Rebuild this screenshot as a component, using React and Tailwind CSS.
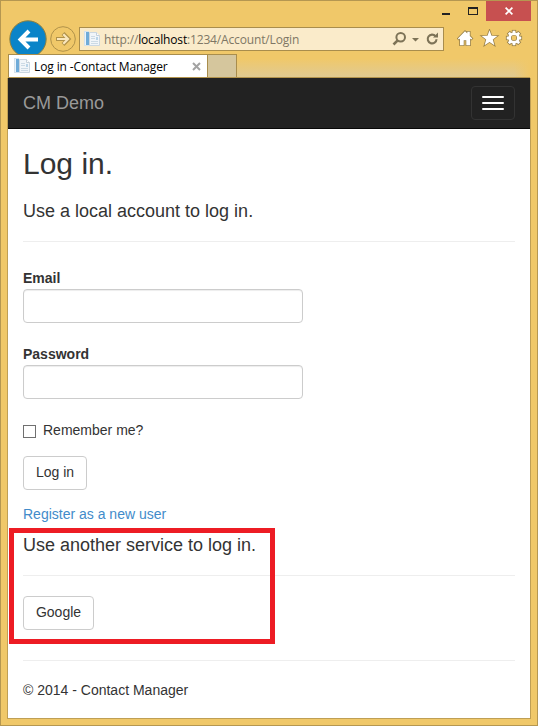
import React from "react";

function PageIcon() {
  return (
    <svg width="16" height="16" viewBox="0 0 16 16" className="block shrink-0">
      <path d="M5.500 1.500h7l3 3v10h-10z" fill="#f1f5f9" stroke="#cbd7e1" />
      <path d="M12.500 1.500v3h3" fill="#fff" stroke="#c5d0da" />
      <path d="M7 5.500h4M7 7.500h4M7 10.500h7M7 12.500h7" stroke="#ccdae5" />
      <rect x="12" y="6" width="2" height="3" fill="#b9d4e8" />
      <rect x="0.500" y="0.500" width="4" height="14" fill="#eaf3fa" stroke="#d5e2ec" />
      <rect x="2" y="1" width="3" height="13" fill="#6fabd8" />
    </svg>
  );
}

function BackButton() {
  return (
    <svg width="38" height="34" viewBox="0 0 38 34" className="block">
      <circle cx="19" cy="19" r="18.200" fill="#0a84c8" stroke="#8f803f" strokeWidth="1" />
      <path d="M29 19.500H11.500M20 11L11.500 19.500l8.500 8.500" fill="none" stroke="#fff" strokeWidth="4" />
    </svg>
  );
}

function ForwardButton() {
  return (
    <svg width="26" height="26" viewBox="0 0 26 26" className="block">
      <circle cx="13" cy="13" r="12.300" fill="none" stroke="#b0924a" />
      <path d="M6 13h12M13 7.500l5.500 5.500l-5.500 5.500" fill="none" stroke="#b0924a" strokeWidth="4" />
      <path d="M7 13h11M13.300 8.200L18 13l-4.700 4.800" fill="none" stroke="#fae7bd" strokeWidth="2.200" />
    </svg>
  );
}

function AddressIcons() {
  return (
    <svg width="50" height="22" viewBox="0 0 50 22" className="block">
      <g fill="none" stroke="#7d7357">
        <circle cx="8.700" cy="9.200" r="4.300" strokeWidth="2" />
        <path d="M5.700 12.300L1.500 16.500" strokeWidth="2.600" />
        <path d="M43.500 8.200a4.400 4.400 0 1 0 1 3" strokeWidth="2.100" />
      </g>
      <path d="M20 10h7l-3.500 3.500zM41 9.500h5v-5z" fill="#7d7357" />
    </svg>
  );
}

const gearTeeth = [0, 45, 90, 135, 180, 225, 270, 315];

function ToolIcons() {
  return (
    <svg width="66" height="18" viewBox="0 0 66 18" className="block">
      <g fill="#fff" stroke="#9a824a" strokeWidth="1.600" paintOrder="stroke">
        <path d="M.9 9.500L8 2.200l2.300 2.200V2.800h2.500v4.100l2.500 2.600-1 1-1.200-1v6.700H9.300v-5H6.700v5H3V9.500l-1.100 1z" />
        <path d="M32.500 1.300l2 5.400 5.800.2-4.500 3.600 1.600 5.700-4.900-3.300-4.900 3.300 1.600-5.700-4.500-3.600 5.800-.2z" />
      </g>
      <g transform="translate(57 9)">
        <g fill="#fff" stroke="#9a824a" strokeWidth="1">
          {gearTeeth.map((a) => (
            <rect key={a} x="-1.700" y="-7.600" width="3.400" height="4" transform={`rotate(${a})`} />
          ))}
        </g>
        <circle r="4.400" fill="none" stroke="#9a824a" strokeWidth="4" />
        <g fill="#fff">
          {gearTeeth.map((a) => (
            <rect key={a} x="-1.300" y="-7.200" width="2.600" height="3" transform={`rotate(${a})`} />
          ))}
        </g>
        <circle r="4.400" fill="none" stroke="#fff" strokeWidth="2.700" />
      </g>
    </svg>
  );
}

function Rule({ className }) {
  return <div className={`h-px bg-[#eeeeee] ${className}`} />;
}

function Field({ label, type, className }) {
  return (
    <label className={`block ${className}`}>
      <span className="block h-[21px] font-bold leading-5">{label}</span>
      <input
        type={type}
        className="block h-[34px] w-[280px] rounded border border-[#cccccc] bg-white px-3 shadow-[inset_0_1px_1px_rgba(0,0,0,0.075)] outline-none"
      />
    </label>
  );
}

function Button({ children, className }) {
  return (
    <button className={`block h-[34px] rounded border border-[#cccccc] bg-white pb-[2px] text-center leading-5 ${className}`}>
      {children}
    </button>
  );
}

function BrowserChrome() {
  return (
    <header className="h-[77px] font-['Open_Sans','Noto_Sans',sans-serif]">
      <div className="-mr-px flex h-[19px] justify-end">
        <div className="order-last flex h-5 w-[45px] shrink-0 items-center justify-center bg-[#c75050]">
          <svg width="8" height="8" viewBox="0 0 8 8">
            <path d="M.6.600l6.800 6.800M7.400.600L.600 7.400" stroke="#fff" strokeWidth="1.700" />
          </svg>
        </div>
        <div className="mr-[18px] mt-3 h-0.5 w-2 bg-[#222]" />
        <div className="mr-2 mt-[6px] h-2 w-[10px] border border-t-2 border-[#222]" />
      </div>
      <div className="flex h-[34px] items-start">
        <div className="ml-[1px] w-[38px]"><BackButton /></div>
        <div className="ml-[3px] mt-[6px] w-[26px]"><ForwardButton /></div>
        <div className="ml-[3px] mt-[7px] flex h-6 w-[365px] items-center border border-[#a98d4c] bg-[#faebca] pl-1">
          <PageIcon />
          <span className="ml-1 w-[200px] whitespace-nowrap pt-[2px] text-[12px] leading-5 tracking-[-0.155px] text-[#7e7765]">
            http://<span className="text-black">localhost</span>:1234/Account/Login
          </span>
          <span className="ml-[88px]"><AddressIcons /></span>
        </div>
        <div className="ml-[13px] mt-[9px]"><ToolIcons /></div>
      </div>
      <div className="flex h-[24px] border-b border-[#b2934c] bg-linear-to-b from-[#f0c869] from-20% to-[#e0ca91]">
        <div className="w-px bg-[#a98d4c]" />
        <div className="flex w-[199px] items-center border-r border-t border-[#a98d4c] bg-white pl-[5px]">
          <PageIcon />
          <span className="ml-1 w-[136px] whitespace-nowrap pt-px text-[12px] leading-5 tracking-[-0.12px] text-black">
            Log in -Contact Manager
          </span>
          <svg width="9" height="9" viewBox="0 0 9 9" className="ml-[22px]">
            <path d="M1 1l7 7M8 1L1 8" stroke="#a3a3a3" strokeWidth="2" />
          </svg>
        </div>
        <div className="w-[29px] border-r border-t border-[#a98d4c] bg-[#d5c69d]" />
        <div className="ml-auto w-4 bg-linear-to-l from-[#f0c869] to-transparent" />
      </div>
    </header>
  );
}

function Navbar() {
  return (
    <nav className="flex h-[51px] items-center justify-between border-b border-[#080808] bg-[#222222] px-[15px]">
      <span className="text-[18px] leading-5 text-[#999999]">CM Demo</span>
      <button className="flex h-[34px] w-11 flex-col items-center justify-center gap-1 rounded border border-[#333333]">
        <span className="h-0.5 w-[22px] rounded-[1px] bg-white" />
        <span className="h-0.5 w-[22px] rounded-[1px] bg-white" />
        <span className="h-0.5 w-[22px] rounded-[1px] bg-white" />
      </button>
    </nav>
  );
}

export default function App() {
  return (
    <div className="relative h-[726px] w-[538px] overflow-hidden border border-[#b59751] bg-[#f0c869] px-[7px] font-['Liberation_Sans',Arial,sans-serif] text-[14px] leading-5 text-[#333333]">
      <BrowserChrome />
      <div className="-ml-px h-[641px] w-[524px] border border-t-0 border-[#bf9f55] bg-white">
        <Navbar />
        <main className="px-[15px] pt-[18px]">
          <h2 className="h-[54px] text-[30px] leading-[33px]">Log in.</h2>
          <h4 className="h-10 text-[18px] leading-5">Use a local account to log in.</h4>
          <Rule className="" />
          <Field label="Email" type="text" className="mt-[26px]" />
          <Field label="Password" type="password" className="mt-[21px]" />
          <label className="mt-[21px] flex h-5">
            <input type="checkbox" className="mt-[5px] h-[13px] w-[13px] appearance-none border border-[#707070] bg-white" />
            <span className="ml-[7px]">Remember me?</span>
          </label>
          <Button className="mt-4 w-16">Log in</Button>
          <a className="mt-[14px] block h-5 text-[#428bca]">Register as a new user</a>
          <h4 className="mt-[11px] h-10 text-[18px] leading-5">Use another service to log in.</h4>
          <Rule className="" />
          <Button className="mt-5 w-[71px]">Google</Button>
          <Rule className="mt-[30px]" />
          <p className="mt-[19px]">© 2014 - Contact Manager</p>
        </main>
      </div>
      {/* Highlight frame laid over the external login section */}
      <div className="pointer-events-none absolute left-[8px] top-[527px] h-[116px] w-[266px] border-5 border-[#ed1c24]" />
    </div>
  );
}
